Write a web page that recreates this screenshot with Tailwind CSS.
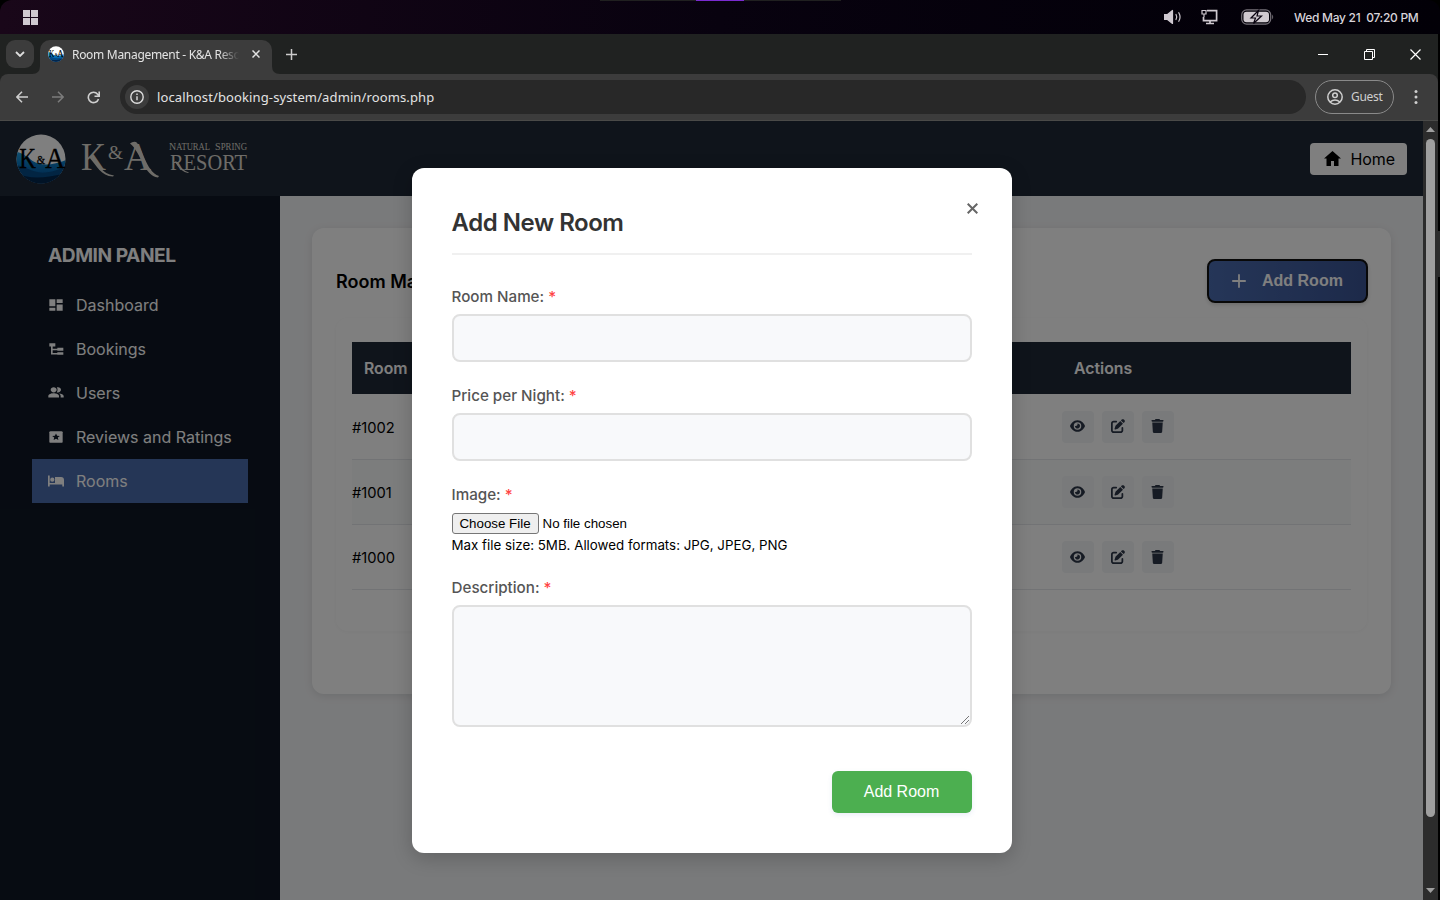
<!DOCTYPE html>
<html lang="en">
<head>
<meta charset="utf-8">
<title>Room Management - K&amp;A Resort</title>
<script src="https://cdn.jsdelivr.net/npm/@tailwindcss/browser@4"></script>
</head>
<body class="w-[1440px] h-[900px] overflow-hidden bg-black font-['Inter',sans-serif] flex flex-col">
<svg class="absolute w-0 h-0">
  <defs>
    <linearGradient id="sea" x1="0" y1="0" x2="0" y2="1"><stop offset="0" stop-color="#22a0e4"/><stop offset=".35" stop-color="#0a7cc4"/><stop offset=".65" stop-color="#0560a8"/><stop offset="1" stop-color="#021c3c"/></linearGradient>
    <clipPath id="disc"><circle cx="24" cy="24" r="23.500"/></clipPath>
    <symbol id="logo" viewBox="0 0 48 48">
      <g clip-path="url(#disc)">
        <rect width="48" height="48" fill="#fff"/>
        <path d="M0 17C6 18 10 21 16 26C24 31 36 30 48 25V48H0Z" fill="url(#sea)"/>
        <path d="M0 30C10 31 16 38 28 37C38 36 44 33 48 31V48H0Z" fill="#044a86"/>
        <path d="M0 38C10 42 24 44 46 38V48H0Z" fill="#02264c"/>
      </g>
      <g font-family="Liberation Serif, serif" fill="#000" stroke="#000" stroke-width=".3">
        <text x="3" y="33" font-size="28" textLength="16" lengthAdjust="spacingAndGlyphs">K</text>
        <text x="20" y="29" font-size="12" textLength="8" lengthAdjust="spacingAndGlyphs">&amp;</text>
        <text x="28" y="33" font-size="28" textLength="19" lengthAdjust="spacingAndGlyphs">A</text>
      </g>
    </symbol>
    <symbol id="eye" viewBox="0 0 576 512"><path d="M288 32c-80.800 0-145.500 36.800-192.600 80.600C48.600 156 17.300 208 2.500 243.700c-3.300 7.900-3.300 16.700 0 24.600C17.300 304 48.600 356 95.400 399.400C142.500 443.200 207.200 480 288 480s145.500-36.800 192.600-80.600c46.800-43.500 78.100-95.400 93-131.100c3.300-7.900 3.300-16.700 0-24.600c-14.900-35.700-46.200-87.700-93-131.100C433.500 68.800 368.800 32 288 32zM144 256a144 144 0 1 1 288 0 144 144 0 1 1-288 0zm144-64c0 35.300-28.700 64-64 64c-7.100 0-13.900-1.200-20.300-3.300c-5.500-1.800-11.900 1.600-11.700 7.400c.3 6.900 1.300 13.800 3.200 20.700c13.700 51.200 66.400 81.600 117.600 67.900s81.600-66.400 67.900-117.600c-11.100-41.500-47.800-69.400-88.600-71.100c-5.800-.2-9.200 6.100-7.400 11.700c2.100 6.400 3.300 13.200 3.300 20.300z"/></symbol>
    <symbol id="edit" viewBox="0 0 512 512"><path d="M471.600 21.700c-21.900-21.900-57.300-21.900-79.200 0L362.300 51.700l97.900 97.900 30.100-30.100c21.900-21.900 21.900-57.300 0-79.200L471.600 21.700zm-299.200 220c-6.100 6.100-10.800 13.600-13.500 21.900l-29.600 88.800c-2.900 8.600-.6 18.100 5.800 24.600s15.900 8.700 24.600 5.800l88.800-29.600c8.200-2.700 15.700-7.400 21.900-13.500L437.700 172.300 339.700 74.300 172.400 241.700zM96 64C43 64 0 107 0 160V416c0 53 43 96 96 96H352c53 0 96-43 96-96V320c0-17.700-14.300-32-32-32s-32 14.300-32 32v96c0 17.700-14.300 32-32 32H96c-17.700 0-32-14.300-32-32V160c0-17.700 14.300-32 32-32h96c17.700 0 32-14.300 32-32s-14.300-32-32-32H96z"/></symbol>
    <symbol id="trash" viewBox="0 0 448 512"><path d="M135.200 17.700L128 32H32C14.300 32 0 46.300 0 64S14.300 96 32 96H416c17.700 0 32-14.300 32-32s-14.300-32-32-32H320l-7.200-14.300C307.400 6.800 296.300 0 284.200 0H163.800c-12.100 0-23.200 6.800-28.600 17.700zM416 128H32L53.200 467c1.600 25.300 22.600 45 47.900 45H346.900c25.300 0 46.300-19.700 47.900-45L416 128z"/></symbol>
  </defs>
</svg>

<!-- Desktop bar -->
<div class="relative h-[34px] shrink-0 bg-linear-to-r from-[#190719] via-[#08020f] to-[#020007] rounded-t-xl flex items-center justify-between pl-[23px] pr-[21px] text-[#d8d3da]">
  <div class="absolute left-[600px] top-0 w-[241px] h-px bg-[#202020] pl-24"><div class="w-12 h-px bg-[#7a2bd0]"></div></div>
  <svg class="w-[15px] h-[15px]" viewBox="0 0 15 15" fill="#d0cad0"><path d="M0 0h7v7H0zM8 0h7v7H8zM0 8h7v7H0zM8 8h7v7H8z"/></svg>
  <div class="flex items-center">
    <svg class="w-[18px] h-4" viewBox="0 0 18 16" fill="none" stroke="#cfc9d0" stroke-width="1.200" stroke-linecap="round"><path d="M0.500 5.500h3L8.500 1.500v13L3.500 10.500h-3z" fill="#cfc9d0" stroke-linejoin="round"/><path d="M12 5.500q1.500 2.500 0 5M14.800 3.700q2.500 4.300 0 8.600"/></svg>
    <svg class="w-[17px] h-4 ml-[19px]" viewBox="0 0 17 16" fill="none" stroke="#cfc9d0" stroke-width="1.700"><path d="M6 1.700h9.600v10H2.500V8M5 14.500h8M9 12v2.500"/><path d="M1 1.500h4v3.500H1zM3 5v3" stroke-width="1.200"/></svg>
    <svg class="w-[33px] h-4 ml-[23px]" viewBox="0 0 33 16"><rect x=".7" y=".9" width="29" height="14.200" rx="5" fill="none" stroke="#77727a" stroke-width="1.200"/><rect x="2.500" y="2.700" width="25.500" height="10.600" rx="3" fill="#d0cad0"/><path d="M31.200 5.500q2 2.500 0 5z" fill="#77727a"/><path d="M17.500 1.500L10 9h4.500L12.500 14.500L20.500 7H16z" fill="#d0cad0" stroke="#08020f" stroke-width="1.200"/></svg>
    <span class="ml-[20px] w-[125px] text-[12px] font-medium whitespace-pre tracking-[-0.28px] pt-px">Wed May 21  07:20 PM</span>
  </div>
</div>

<!-- Browser window -->
<div class="w-[1438px] h-[866px] shrink-0 flex flex-col bg-[#202221] font-['Noto_Sans',sans-serif]">
  <div class="h-10 flex items-start pl-[6px] pt-[6px] relative">
    <div class="w-7 h-7 rounded-[9px] bg-[#3c3c3c] flex items-center justify-center"><svg class="w-[10px] h-[6px]" viewBox="0 0 10 6" fill="none" stroke="#ddd" stroke-width="1.800"><path d="M1 1l4 4 4-4"/></svg></div>
    <div class="w-[6px] h-[34px]"></div>
    <div class="w-[232px] h-[34px] rounded-t-[10px] bg-[#3c3c3c] flex items-center pl-2 relative">
      <svg class="absolute -left-2 bottom-0 w-2 h-2" viewBox="0 0 8 8" fill="#3c3c3c"><path d="M8 0v8H0q8 0 8-8z"/></svg>
      <svg class="absolute -right-2 bottom-0 w-2 h-2" viewBox="0 0 8 8" fill="#3c3c3c"><path d="M0 0v8h8q-8 0-8-8z"/></svg>
      <svg class="w-4 h-4 -mt-[6px]"><use href="#logo"/></svg>
      <span class="ml-2 w-[167px] overflow-hidden whitespace-nowrap text-[12px] tracking-[-0.3px] leading-[18px] -mt-[4px] text-[#e3e3e3] [mask-image:linear-gradient(to_right,black_88%,transparent)]">Room Management - K&amp;A Resort</span>
      <svg class="w-2 h-2 ml-[13px] -mt-[6px]" viewBox="0 0 8 8" stroke="#e3e3e3" stroke-width="1.500"><path d="M.5.5l7 7M7.500.5l-7 7"/></svg>
    </div>
    <svg class="w-[11px] h-[11px] ml-[14px] mt-[9px]" viewBox="0 0 11 11" stroke="#ccc" stroke-width="1.500"><path d="M5.500 0v11M0 5.500h11"/></svg>
    <div class="ml-auto mr-[17px] mt-[9px] flex items-center text-white">
      <svg class="w-[10px] h-[11px]" viewBox="0 0 10 11" stroke="#fff"><path d="M0 5.500h10"/></svg>
      <svg class="w-[11px] h-[11px] ml-9" viewBox="0 0 11 11" fill="none" stroke="#fff"><path d="M.5 2.500h8v8h-8zM2.500 2.500v-2h8v8h-2"/></svg>
      <svg class="w-[11px] h-[11px] ml-[35px]" viewBox="0 0 11 11" stroke="#fff" stroke-width="1.200"><path d="M.5.5l10 10M10.500.5l-10 10"/></svg>
    </div>
  </div>
  <div class="h-[47px] bg-[#3c3c3c] rounded-t-lg border-b border-[#4a4a48] flex items-center pl-4 pr-[19px]">
    <svg class="w-3 h-3" viewBox="0 0 12 12" fill="none" stroke="#cfcfcf" stroke-width="1.500"><path d="M12 6H1M6 .8L.9 6 6 11.200"/></svg>
    <svg class="w-3 h-3 ml-6" viewBox="0 0 12 12" fill="none" stroke="#7c7c7c" stroke-width="1.500"><path d="M0 6h11M6 .8L11.100 6 6 11.200"/></svg>
    <svg class="w-[13px] h-[13px] ml-[23px]" viewBox="0 0 13 13" fill="none" stroke="#cfcfcf" stroke-width="1.600"><path d="M11.500 8A5.200 5.200 0 1 1 10.600 3.200L12 4.800M12.200.5v4.700H7.500"/></svg>
    <div class="ml-5 w-[1186px] h-[34px] rounded-full bg-[#282828] flex items-center pl-[5px]">
      <div class="w-6 h-6 rounded-full bg-[#3c3c3c] flex items-center justify-center"><svg class="w-[14px] h-[14px]" viewBox="0 0 14 14" fill="none" stroke="#ddd" stroke-width="1.400"><circle cx="7" cy="7" r="6.200"/><path d="M7 6.300v4M7 3.500v1.500"/></svg></div>
      <span class="ml-[8px] pt-px text-[13px] tracking-[0.12px] text-[#e3e3e3]">localhost/booking-system/admin/rooms.php</span>
    </div>
    <div class="ml-[9px] w-[79px] h-[34px] rounded-full border border-[#8a8a8a] flex items-center pl-[11px] text-[#cfcfcf]">
      <svg class="w-4 h-4" viewBox="0 0 16 16" fill="none" stroke="#cfcfcf" stroke-width="1.500"><circle cx="8" cy="8" r="7.200"/><circle cx="8" cy="6.200" r="2.300"/><path d="M3 13q5-4 10 0"/></svg>
      <span class="ml-2 text-[12px] tracking-[-0.3px]">Guest</span>
    </div>
    <svg class="w-1 h-[14px] ml-5 shrink-0" viewBox="0 0 4 14" fill="#cfcfcf"><circle cx="2" cy="1.600" r="1.500"/><circle cx="2" cy="7" r="1.500"/><circle cx="2" cy="12.400" r="1.500"/></svg>
  </div>

  <div class="h-[779px] flex">
    <!-- Page -->
    <div class="relative w-[1423px] h-full bg-[#f3f4f6] flex flex-col font-['Inter',sans-serif]">
      <header class="h-[75px] bg-[#1f2937] flex items-center justify-between pl-4 pr-4">
        <div class="flex items-center">
          <svg class="w-[50px] h-[50px]"><use href="#logo"/></svg>
          <svg class="w-[170px] h-[50px] ml-[14px]" viewBox="0 0 170 50" font-family="Liberation Serif, serif" fill="#dcd9d0">
            <text x="1" y="36" font-size="39" textLength="25" lengthAdjust="spacingAndGlyphs">K</text>
            <path d="M11 22C18 30 22 40 34 41.500L33 42.500C21 42 17 32 9 23z"/>
            <text x="28" y="25" font-size="18" textLength="15" lengthAdjust="spacingAndGlyphs">&amp;</text>
            <text x="44" y="36" font-size="41" textLength="27" lengthAdjust="spacingAndGlyphs">A</text>
            <path d="M56 8C62 12 66 38 79 42L78 43.500C64 42 61 18 50 9.500Q53 7 56 8z"/>
            <text x="89" y="16" font-size="9.500" textLength="41" lengthAdjust="spacingAndGlyphs"><tspan font-size="11">N</tspan>ATURAL</text>
            <text x="135" y="16" font-size="9.500" textLength="32" lengthAdjust="spacingAndGlyphs"><tspan font-size="11">S</tspan>PRING</text>
            <text x="90" y="36" font-size="23" textLength="77" lengthAdjust="spacingAndGlyphs">RESORT</text>
            <path d="M96 27Q101 36 109 38.500L108 39Q101 38 95 28z"/>
          </svg>
        </div>
        <div class="w-[97px] h-8 rounded-[4px] bg-white flex items-center pl-[14px] text-black">
          <svg class="w-[17px] h-[15px]" viewBox="0 0 17 15"><path d="M8.500 0L17 7.500H14.500V15H10V10H7V15H2.500V7.500H0z"/></svg>
          <span class="ml-[9.500px] text-[16px] tracking-[-0.1px]">Home</span>
        </div>
      </header>
      <div class="flex-1 flex">
        <aside class="w-[280px] bg-[#0e1724] px-8 pt-10 text-[#fff] flex flex-col">
          <div class="h-[38px] flex items-center pl-4 text-[19.200px] font-bold tracking-[-0.48px]">ADMIN PANEL</div>
          <nav class="mt-[9px] flex flex-col text-[16px]">
            <a class="h-11 flex items-center pl-4"><svg class="w-4 h-[14px]" viewBox="0 0 24 24" preserveAspectRatio="none" fill="#fff"><path d="M2 2h9v12H2zM13 2h9v6.500h-9zM13 11h9v11h-9zM2 16.500h9V22H2z"/></svg><span class="ml-3">Dashboard</span></a>
            <a class="h-11 flex items-center pl-4"><svg class="w-4 h-[14px]" viewBox="0 0 24 24" preserveAspectRatio="none" fill="#fff"><path d="M2 2h9v5.500H2zM14 10h9v5h-9zM14 17.500h9V22h-9zM4.500 7.500h2.500v4h7v2.500H7v5h7v2.500H4.500z"/></svg><span class="ml-3">Bookings</span></a>
            <a class="h-11 flex items-center pl-4"><svg class="w-4 h-[14px]" viewBox="0 0 24 24" preserveAspectRatio="none" fill="#fff"><path d="M15 11c2.500 0 4.500-2 4.500-4.500S17.500 2 15 2c-.8 0-1.300.1-1.800.4 1.500 2.300 1.500 5.700 0 8.100.5.300 1.100.5 1.800.5zM8.500 11C11 11 13 9 13 6.500S11 2 8.500 2 4 4 4 6.500 6 11 8.500 11zM8.500 12.500c-3 0-8 1.500-8 4.500V19.500h16V17c0-3-5-4.500-8-4.500zM16.500 12.700c1.300 1 2.500 2.500 2.500 4.300v2.500h4.500V17c0-2.500-3.800-3.900-7-4.300z"/></svg><span class="ml-3">Users</span></a>
            <a class="h-11 flex items-center pl-4"><svg class="w-4 h-[14px]" viewBox="0 0 24 24" preserveAspectRatio="none"><rect x="2" y="2" width="20" height="20" rx="2" fill="#fff"/><path d="M12 6l1.700 3.800 4.100.4-3.100 2.800.9 4.100L12 15l-3.600 2.100.9-4.100-3.100-2.800 4.100-.4z" fill="#0e1724"/></svg><span class="ml-3">Reviews and Ratings</span></a>
            <a class="h-11 flex items-center pl-4 bg-[#4b6cac]"><svg class="w-4 h-[12px]" viewBox="0 0 16 12" fill="#fff"><path d="M0 .5h1.700V8H7V2h6q3 0 3 3v6.500h-1.700V9.500H1.700v2H0z"/><circle cx="4.300" cy="4.700" r="2.100"/></svg><span class="ml-3">Rooms</span></a>
          </nav>
        </aside>
        <main class="flex-1 p-8">
          <section class="h-[466px] rounded-xl bg-white shadow-[0_2px_8px_rgba(0,0,0,0.1)] px-6 pt-[31px]">
            <div class="flex justify-between items-center h-11 -mr-px">
              <h1 class="text-[18px] font-semibold text-black">Room Management</h1>
              <button class="w-[161px] h-11 rounded-lg border-2 border-[#101010] bg-linear-to-r from-[#4b6cb0] to-[#3a5494] shadow-[0_2px_4px_rgba(0,0,0,0.15)] flex items-center pl-[23px] text-white font-['Liberation_Sans',sans-serif] font-bold text-[16px]">
                <svg class="w-[14px] h-[14px]" viewBox="0 0 14 14" stroke="#fff" stroke-width="1.800" stroke-linecap="round"><path d="M7 .9v12.200M.9 7h12.200"/></svg><span class="ml-4 -mt-px">Add Room</span></button>
            </div>
            <div class="mt-[15px] h-[313px] w-[1031px] rounded-xl shadow-[0_1px_5px_rgba(0,0,0,0.04)] px-4 pt-6">
              <div class="w-[999px] h-[52px] bg-[#1f2937] text-white flex items-center text-[15.800px] font-semibold pt-px"><span class="w-[710px] pl-3 [word-spacing:2px]">Room ID</span><span class="pl-3">Actions</span></div>
              <div class="w-[999px] h-[66px] border-b border-[#e5e7eb] flex items-center text-[14.700px] text-black"><span class="w-[710px] pt-[3px]">#1002</span><span class="flex gap-2"><i class="w-8 h-8 rounded bg-[#f3f4f6] flex items-center justify-center pb-px pr-px"><svg class="w-[15px] h-[14px]" fill="#2d3748"><use href="#eye"/></svg></i><i class="w-8 h-8 rounded bg-[#f3f4f6] flex items-center justify-center pb-px pr-px"><svg class="w-[14px] h-[14px]" fill="#2d3748"><use href="#edit"/></svg></i><i class="w-8 h-8 rounded bg-[#f3f4f6] flex items-center justify-center pb-px pr-px"><svg class="w-[13px] h-[14px]" fill="#2d3748"><use href="#trash"/></svg></i></span></div>
              <div class="w-[999px] h-[65px] border-b border-[#e5e7eb] bg-[#f8fafa] flex items-center text-[14.700px] text-black"><span class="w-[710px] pt-0.5">#1001</span><span class="flex gap-2"><i class="w-8 h-8 rounded bg-[#f3f4f6] flex items-center justify-center pb-px pr-px"><svg class="w-[15px] h-[14px]" fill="#2d3748"><use href="#eye"/></svg></i><i class="w-8 h-8 rounded bg-[#f3f4f6] flex items-center justify-center pb-px pr-px"><svg class="w-[14px] h-[14px]" fill="#2d3748"><use href="#edit"/></svg></i><i class="w-8 h-8 rounded bg-[#f3f4f6] flex items-center justify-center pb-px pr-px"><svg class="w-[13px] h-[14px]" fill="#2d3748"><use href="#trash"/></svg></i></span></div>
              <div class="w-[999px] h-[65px] border-b border-[#e5e7eb] flex items-center text-[14.700px] text-black"><span class="w-[710px] pt-0.5">#1000</span><span class="flex gap-2"><i class="w-8 h-8 rounded bg-[#f3f4f6] flex items-center justify-center pb-px pr-px"><svg class="w-[15px] h-[14px]" fill="#2d3748"><use href="#eye"/></svg></i><i class="w-8 h-8 rounded bg-[#f3f4f6] flex items-center justify-center pb-px pr-px"><svg class="w-[14px] h-[14px]" fill="#2d3748"><use href="#edit"/></svg></i><i class="w-8 h-8 rounded bg-[#f3f4f6] flex items-center justify-center pb-px pr-px"><svg class="w-[13px] h-[14px]" fill="#2d3748"><use href="#trash"/></svg></i></span></div>
            </div>
          </section>
        </main>
      </div>

      <!-- Modal -->
      <div class="absolute inset-0 bg-black/50 flex justify-center pt-[47px]">
        <div class="relative w-[600px] h-[685px] rounded-xl bg-white shadow-[0_5px_20px_rgba(0,0,0,0.2)] px-10 pt-10 flex flex-col">
          <svg class="absolute left-[555px] top-[35px] w-[11px] h-[11px]" viewBox="0 0 11 11" stroke="#666" stroke-width="2"><path d="M.7.7l9.600 9.600M10.300.7L.7 10.300"/></svg>
          <h2 class="h-[47px] shrink-0 border-b-2 border-[#f0f0f0] text-[24px] tracking-[-0.46px] leading-[30px] font-semibold text-[#333]">Add New Room</h2>
          <label class="mt-[30px] h-[24px] text-[15.200px] leading-6 font-medium text-[#555]">Room Name: <span class="text-[#ff4444]">*</span></label>
          <div class="mt-[5px] h-12 rounded-lg border-2 border-[#e0e0e0] bg-[#f8f9fb]"></div>
          <label class="mt-[22px] h-[24px] text-[15.200px] leading-6 font-medium text-[#555]">Price per Night: <span class="text-[#ff4444]">*</span></label>
          <div class="mt-[5px] h-12 rounded-lg border-2 border-[#e0e0e0] bg-[#f8f9fb]"></div>
          <label class="mt-[22px] h-[24px] text-[15.200px] leading-6 font-medium text-[#555]">Image: <span class="text-[#ff4444]">*</span></label>
          <div class="mt-[6px] h-[21px] flex items-center font-['Liberation_Sans',sans-serif] text-[13.333px] text-black"><span class="w-[87px] h-[21px] rounded-[3px] border border-[#767676] bg-[#efefef] flex items-center justify-center">Choose File</span><span class="ml-1">No file chosen</span></div>
          <div class="h-[22px] leading-[23px] text-[13.333px] text-black">Max file size: 5MB. Allowed formats: JPG, JPEG, PNG</div>
          <label class="mt-[20px] h-[24px] text-[15.200px] leading-6 font-medium text-[#555]">Description: <span class="text-[#ff4444]">*</span></label>
          <div class="mt-[5px] h-[122px] shrink-0 rounded-lg border-2 border-[#e0e0e0] bg-[#f8f9fb] flex items-end justify-end"><svg class="w-[9px] h-[9px]" viewBox="0 0 9 9" stroke="#555" stroke-width=".8"><path d="M0 8L8 0M4 8L8 4"/></svg></div>
          <button class="mt-11 w-[140px] h-[42px] self-end rounded-md bg-[#4caf50] shadow-[0_2px_5px_rgba(75,108,183,0.12)] font-['Liberation_Sans',sans-serif] text-[16px] text-white font-medium pb-px">Add Room</button>
        </div>
      </div>
    </div>
    <!-- Scrollbar -->
    <div class="w-[15px] h-full bg-[#2c2c2c] flex flex-col items-center pt-[6px]">
      <svg class="w-[9px] h-[5px]" viewBox="0 0 9 5" fill="#9f9f9f"><path d="M0 5L4.500 0 9 5z"/></svg>
      <div class="mt-[7px] w-[9px] h-[678px] rounded-full bg-[#9f9f9f]"></div>
      <svg class="mt-[71px] w-[9px] h-[5px]" viewBox="0 0 9 5" fill="#9f9f9f"><path d="M0 0L4.500 5 9 0z"/></svg>
    </div>
    <div class="w-0 shrink-0 relative"><div class="absolute left-0 top-[110px] w-[2px] h-[46px] bg-[#2c2c2c]"></div></div>
  </div>
</div>
</body>
</html>
